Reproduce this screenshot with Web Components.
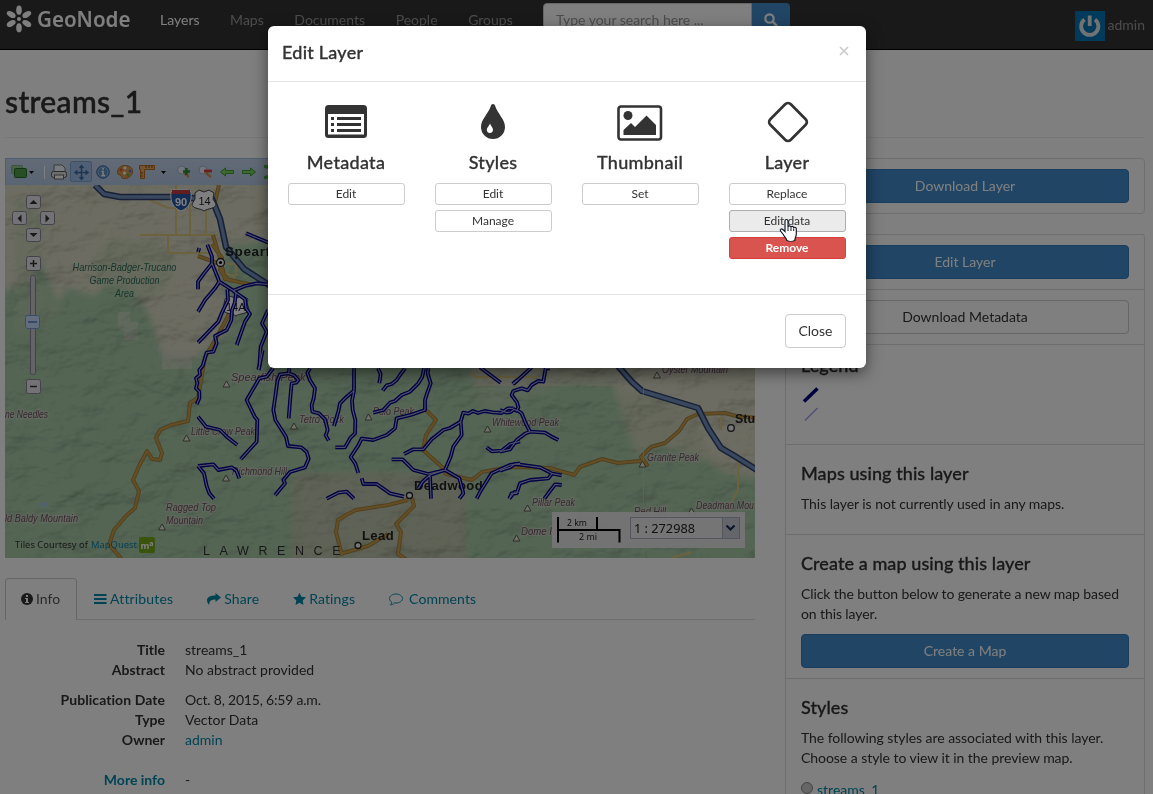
<!DOCTYPE html>
<html lang="en"><head><meta charset="utf-8"><title>streams_1 - GeoNode</title>
<style>
html,body{margin:0;height:100%;overflow:hidden;background:#fff}
body{font:14px/20px Lato,"Liberation Sans",sans-serif;color:#333;font-variant-ligatures:none}
</style></head><body>
<geo-page></geo-page>
<script>
const def=(name,html)=>{const t=document.createElement('template');t.innerHTML=html;
customElements.define(name,class extends HTMLElement{constructor(){super();this.attachShadow({mode:'open'}).append(t.content.cloneNode(true));}});};

def('geo-button',`<style>
:host{display:flex;box-sizing:border-box;height:34px;align-items:center;justify-content:center;border:1px solid #357ebd;border-radius:4px;background:#428bca;color:#fff;font-size:14px;line-height:20px}
:host([kind=plain]){background:#fff;border-color:#ccc;color:#333}
:host([kind=danger]){background:#d9534f;border-color:#d43f3a;color:#fff;font-weight:700}
:host([size=xs]){height:22px;font-size:12px;border-radius:3px;line-height:18px;padding-right:1px}
:host([hot]){background:#ebebeb;border-color:#adadad}
</style><slot></slot>`);

def('geo-header',`<style>
:host{display:flex;height:49px;box-sizing:content-box;background:#333;border-bottom:1px solid #000;color:#999}
.logo{flex:none;width:145px;height:40px}
nav{display:flex;flex:none}
nav span{padding:10px 15.300px}
nav span:first-child{padding-left:15px}
nav .on{color:#fff}
.search{display:flex;margin:3px 0 0 15px;height:34px;flex:none}
.box{box-sizing:border-box;width:208.500px;padding:6px 12px;background:#fff;border:1px solid #ccc;border-radius:4px 0 0 4px;color:#999;letter-spacing:-.02px}
.go{width:38px;background:#428bca;border-radius:0 4px 4px 0;display:flex;align-items:center;justify-content:center}
.user{display:flex;margin:11px 8px 0 auto;gap:3px;line-height:28px;height:30px}
</style>
<svg class="logo" viewBox="0 0 145 40"><g fill="#fff" transform="translate(19 19)"><circle r="2"/>
<ellipse cy="-8.800" rx="2.800" ry="4.600"/><ellipse cy="8.800" rx="2.800" ry="4.600"/>
<g transform="rotate(60)"><ellipse cy="-9" rx="2.800" ry="4.800"/><ellipse cy="9" rx="2.800" ry="4.800"/></g>
<g transform="rotate(120)"><ellipse cy="-9" rx="2.800" ry="4.800"/><ellipse cy="9" rx="2.800" ry="4.800"/></g></g>
<text x="37" y="27" textLength="93.500" lengthAdjust="spacingAndGlyphs" fill="#fff" font-family="Noto Sans,sans-serif" font-weight="600" font-size="22">GeoNode</text></svg>
<nav><span class="on">Layers</span><span>Maps</span><span>Documents</span><span>People</span><span>Groups</span></nav>
<div class="search"><div class="box">Type your search here ...</div><div class="go"><svg width="14" height="14" viewBox="0 0 14 14" fill="none" stroke="#fff"><circle cx="5.500" cy="5.500" r="4.200" stroke-width="2.200"/><path d="M8.700 8.700l3.600 3.600" stroke-width="2.600" stroke-linecap="round"/></svg></div></div>
<div class="user"><svg width="30" height="30" viewBox="0 0 30 30"><rect width="30" height="30" fill="#0077b9"/><path d="M9.500 8.500a8.600 8.600 0 1 0 10.500 0M14.700 4.500v10.500" fill="none" stroke="#e4e4e4" stroke-width="3.800"/></svg><span>admin</span></div>`);

def('map-toolbar',`<style>
:host{display:flex;height:27px;box-sizing:border-box;border:1px solid #99bbe8;border-bottom:0;background:linear-gradient(#c4d5ec,#b4c9e6)}
svg{display:block}
</style><svg width="748" height="26" viewBox="6 159 748 26">
<g stroke="#286a28" fill="#4e9d4a"><rect x="11.500" y="165.500" width="11" height="8" rx="1" fill="#93c590" stroke="#7ba97a"/><rect x="14.500" y="168.500" width="12" height="9" rx="1"/></g>
<path d="M29 171h5l-2.500 3zM161 171h5l-2.500 3z" fill="#111"/><path d="M44.500 166v13" stroke="#fff"/>
<rect x="70.500" y="161.500" width="21" height="20" rx="2" fill="#a0bfe8" stroke="#7ba3d0"/>
<g><path d="M54 165h8l3 3v6H54z" fill="#eef5ff" stroke="#777"/><rect x="51.500" y="171.500" width="15" height="6" rx="2" fill="#ddd" stroke="#555"/><rect x="54.500" y="175" width="9" height="4" fill="#fff" stroke="#666"/></g>
<path d="M81.500 166v13M75 172.500h13M79.500 168l2-2.500 2 2.500M79.500 177l2 2.500 2-2.500M77.500 170.500l-2.500 2 2.500 2M85.500 170.500l2.500 2-2.500 2" fill="none" stroke="#3a6aa0" stroke-width="1.400"/>
<circle cx="103" cy="172" r="6.200" fill="#5f92cb" stroke="#2a5c9e"/><circle cx="103" cy="172" r="5" fill="none" stroke="#b8d0ed" stroke-width=".7"/><path d="M103 168v1.700M101.500 171.500h1.500v4M101.500 175.500h3.500" fill="none" stroke="#fff" stroke-width="1.500"/>
<path d="M125 165.500c5 0 8 3 7.500 6.500s-4 7-9 6.500c-3 0-1-2-2.500-3s-3.500-.5-3.500-3c0-4 3-7 7.500-7z" fill="#d99a55" stroke="#b56c1c"/><g fill="#e64b3a"><circle cx="121" cy="170" r="1.400"/><circle cx="130" cy="171" r="1.500" fill="#4b7cd6"/><circle cx="125" cy="168" r="1.400" fill="#fff"/><circle cx="128" cy="175" r="1.500" fill="#57aa4a"/><circle cx="124.500" cy="173" r="1.500" fill="#fff"/></g>
<path d="M139.500 165.500h15v4h-10v9h-4v-9h-1z" fill="#eba864" stroke="#b46a1a"/><path d="M146 166v2M149 166v2M152 166v2M141 173h2M141 176h2" stroke="#7a4a10"/>
<g fill="#e6eefa" stroke="#a3b1c4"><circle cx="181.500" cy="170" r="4"/><circle cx="203" cy="170" r="4"/></g><path d="M184 173l5 4M206 173l5 4" stroke="#c9904a" stroke-width="2.300"/>
<path d="M186.500 168v7M183 171.500h7" stroke="#2d8f2d" stroke-width="2.500"/><path d="M204 171h8" stroke="#d93a3a" stroke-width="2.800"/>
<path d="M220.500 172l5-4v2.500h8v3h-8v2.500zM255.500 172l-5-4v2.500h-8v3h8v2.500z" fill="#7dd05c" stroke="#3f9a34"/>
<path d="M264 165h5v4l-5-1zM264 179h5v-4l-5 1z" fill="#4eae43"/></svg>`);

def('map-view',`<style>
:host{display:block;height:373px}
svg{display:block;width:750px;height:373px}
.casing{fill:none;stroke:#00008a;stroke-width:11.500;stroke-linejoin:round}
.core{fill:none;stroke:#a0a0d2;stroke-width:3.500;stroke-linejoin:round}
.pk{font:italic 11px "Liberation Sans",sans-serif;fill:#6d525b;stroke:#d8d4d0;stroke-opacity:.55;stroke-width:2.500px;paint-order:stroke}
.city{font:bold 13.500px "Liberation Sans",sans-serif;fill:#222;letter-spacing:.4px}
</style>
<svg viewBox="5 185 750 373"><defs>
<filter id="hill" x="0" y="0" width="1" height="1"><feTurbulence type="fractalNoise" baseFrequency=".022 .036" numOctaves="4" seed="8"/><feDiffuseLighting surfaceScale="8" lighting-color="#fff" diffuseConstant="1.150"><feDistantLight azimuth="225" elevation="58"/></feDiffuseLighting></filter>
<filter id="soft"><feGaussianBlur stdDeviation="3"/></filter>
<g id="s">
<g transform="translate(0 150) scale(.33333)"><path d="M598 294l-4 12M622 284l14 36v20l22 55 42 27 35-14 35-8 40 4M636 340l-24 30-18 25v23M658 395l-13 20-30 35-21 35M738 250l72 30M682 418l2 32-19 40-10 25-61 63M700 422l8 8-4 30-8 20-2 30-14 30-35 18 5 22-10 25-20 3-12 40-10 12 2 15-12 10 4 15-4 15 10 10v20l-8 18M700 422l35 26 3 27 12 17-15 23-25 70M804 480l-18 40 14 25-18 45-4 60-4 8"/></g>
<g transform="translate(0 350) scale(.33333)"><path d="M594 200l24 30 42 10 20 20 32 25M594 348l46-5 15 17 40-8 14 10 9 23M594 348l18 22 8 38 8 22 14 16"/></g>
<g transform="translate(250 350) scale(.33333)"><path d="M38 0l-6 30-6 30M70 54L50 80l-22 5-38 65 24 50 8 10-2 65-48 53M118 55l-2 15-26 3-8 20-4 32-8 55 6 30 32 50 6 28 40 4 16 14 6 20-11 26-45 14-20 24 5 10-30 36M116 70l16 6 13 14-6 8-14 2-3 30-6 75M180 55l-8 14 8 22 15 24-4 30-6 20 2 20 20 5 18 18 8 32-6 16 9 16M312 55v67l-6 30 2 28 8 30-1 40-14 14-16 28h-29M312 122l-24 20-18 18-5 25-13 43M384 55l8 18-4 27M465 55l-15 20-10 15-15 12-15 4-12 16M522 55l-5 25-12 20-25 25-25 10-20 18-15 5-20 22-30 8M535 55l-2 15 9 30-10 28-7 22v30l-40 14-45 11-5 30-20 16-5 4-40 15-35-4-10 20-23 35 14 20 9 28M335 385l5 17h40l40 28 42 10M230 446l35-18 25-3 22 21M690 52l62 46M425 328h33l14 14 18 18 45 12 50-12M462 312l28-14h30l25-30 35-28 20-6 32-19 8-27 15 3 14-8 15 6 20-6 25 4 25 2 20-14 16 0M632 215l3 40-25 35-8 30-17 40 43 25 12 45-12 16M585 360l-45 15 3 71M540 375l-22 20-13 20M710 292l15 12 30-2 25-20 30-8M680 446l10-20 35-56 55-25 30-5M788 102l14-12M778 446l16-20h12"/></g>
<g transform="translate(500 350) scale(.33333)"><path d="M150 55h-13l-7 40-15-2-20 12-12 16-18-6-25 8-5 12 16 22 4 15-5 10-8-4-10 8-12 2-20-8M95 52L40 102M50 180l15 10 12 30 13 25 45 3 20 12 20 10M90 245l-15 6-25 19-20 28-30 7M0 362l30-10 15-10 75 10 35 18 30 6M155 372l-10 13-55 5-30 10-10 30-15 0-7 16M185 405l-20-2-32 43"/></g></g>
<path id="rd" d="M219 185l-4 17M213 235l6 20 6 24 28 6M198 256l22 8M212 244l10 14-2 12 8 10M236 300l-10 20-12 22-9 15-7 41-8 5-2 18-17 4-11 5-4 8 6 15-2 7-8-1-5-8-8 15-6 14 6 11-4 17-9 8-12 14-5 15 12 13v9M426 410l10 10-10 15-3 15 10 9 10 9 3 6 26 6 10-8 28-5 40 1 24 7 6-8 22-8 16 4 22-2 7 4-6-8 10-10 14-4 14-12 8-12 11-5 27-1 11 3 34 3v36M412 498l2 8-8 8-10 10 5 8-3 22 12 8M408 500l-20 5-32 5-10 5-8 5-2 12 6 23M340 554l28-8 20-12"/>
<path id="hw" d="M95 185l9 9 16 3h50l42 2 8 20 6 28 18 22 28 18M618 366l14 16 10 9 56 17 10 20 13 20 12 7 24 15"/></defs>
<rect x="5" y="185" width="750" height="373" fill="#a9cba9"/>
<g fill="#dad9c4" filter="url(#soft)"><path d="M0 180H275v60l-50 5-5 30 10 55-38 30-30-5-12-40-18-25-22-8-16 14-26-8-10 14-18-40-10 20-30 10z"/><path d="M293 474h175v90H293z" fill="#bec5ac"/><path d="M472 360h150l50 28 60 10 30 40v40h-30l-35-22-40-12-20 10-8-20-15-45-45-4-85 26-12-30z" fill="#ccd1b8"/><path d="M618 390h30l45 20 15 45 60 25v-120H618z"/></g>
<path d="M110 240l-18 22 6 22 35 20 30-14 12-30-20-20zM15 195l30 20-10 60 30 40-50 20z" fill="#bdd0b0" opacity=".55" filter="url(#soft)"/>
<g fill="#d4d4c4"><path d="M162 350h30v19h-30zM118 312h12v10h8v18h-14v-10h-6zM168 326h14v12h-14z" opacity=".6"/></g>
<path d="M475 386h138v72H475zM678 475h57v83h-57zM468 473h90v85h-90z" fill="#a9cba9" opacity=".65"/>
<rect x="5" y="185" width="750" height="373" filter="url(#hill)" style="mix-blend-mode:multiply" opacity=".4"/>
<g fill="none" stroke="#d8c47c" stroke-width="2"><path d="M140 235h78M168 235v18h45M176 185v50M190 198v38M206 200v36M150 200l18 8h20M222 272l12 4v8M228 264h8v12M470 372l6 5h60M723 418h-2v12M738 455v35l-8 15M692 552l-20 6"/></g>
<g fill="none" stroke-linejoin="round"><use href="#rd" stroke="#9c803f" stroke-width="4"/><use href="#rd" stroke="#cc9c48" stroke-width="2.200"/><use href="#hw" stroke="#2c4270" stroke-width="6.500"/><use href="#hw" stroke="#7490bd" stroke-width="3.400"/></g>
<path d="M643.500 368v190" stroke="#ccd" opacity=".5"/><path d="M40 503l8-1-1 5h-7z" fill="#a3c3dd" opacity=".9"/>
<g font-family="Liberation Sans,sans-serif"><path d="M171 192l2-2h16l2 2c1 10-2 16-10 19-8-3-11-9-10-19z" fill="#2759a7" stroke="#fff"/><path d="M172 190h18v4h-18z" fill="#c43a43"/><text x="175" y="206" fill="#fff" font-size="11" font-weight="700">90</text>
<g fill="#fff" stroke="#444"><path d="M195 193l4-3 5 2 5-2 5 3-1 6 3 5c0 5-8 4-12 7-4-3-12-2-12-7l3-5z"/><path d="M225 299l4-3 7 2 7-2 5 3-1 4 2 6c0 5-9 4-13 7-4-3-13-2-13-7z"/></g><text x="198.500" y="205" font-size="11" fill="#222">14</text><text x="226" y="311" font-size="11" fill="#222">14A</text></g>
<text class="city" x="225" y="255.500" style="letter-spacing:.6px">Spearf</text><text class="city" x="414" y="490" textLength="69">Deadwood</text><text class="city" x="362" y="539.500" textLength="32">Lead</text><text class="city" x="735" y="422.500" style="letter-spacing:0" textLength="20">Stu</text>
<g fill="#eee" stroke="#222" stroke-width="1.300"><circle cx="220.500" cy="262.500" r="4"/><circle cx="409.500" cy="495.500" r="3"/><circle cx="358" cy="545.500" r="3"/><circle cx="731" cy="428" r="3.300"/></g><circle cx="220.500" cy="262.500" r="1.600"/>
<g class="pk"><text x="231" y="381">Spearfish Peak</text><text x="299" y="423" textLength="45">Tetro Rock</text><text x="373" y="414.500" textLength="41">Polo Peak</text><text x="492" y="425.500" textLength="67">Whitewood Peak</text><text x="191" y="435" textLength="64">Little Crow Peak</text><text x="232" y="474.500" textLength="55">Richmond Hill</text><text x="166" y="511" textLength="50">Ragged Top</text><text x="166" y="524" textLength="37">Mountain</text><text x="647" y="461" textLength="52">Granite Peak</text><text x="532" y="505.500" textLength="43">Pillar Peak</text><text x="521" y="535" textLength="31">Dome I</text><text x="634" y="515" textLength="32">Red Hill</text><text x="696" y="508.500" textLength="58">Deadman Mou</text><text x="662" y="373" textLength="66">Oyster Mountain</text><text x="5" y="417.500" textLength="43">ne Needles</text><text x="5" y="522" textLength="73">ld Baldy Mountain</text></g>
<g style="font:italic 11px 'Liberation Sans',sans-serif" fill="#2d6d5a" text-anchor="middle"><text x="124.500" y="271" textLength="104">Harrison-Badger-Trucano</text><text x="124.500" y="284" textLength="70">Game Production</text><text x="124.500" y="297" textLength="19">Area</text></g>
<path d="M223 387l3.500-6 3.500 6zM290.500 429l3.500-6 3.500 6zM365 420l3.500-6 3.500 6zM484 432l3.500-6 3.500 6zM183 441l3.500-6 3.500 6zM222.500 481l3.500-6 3.500 6zM158.500 530l3.500-6 3.500 6zM639 467l3.500-6 3.500 6zM524 511l3.500-6 3.500 6zM513 541l3.500-6 3.500 6zM653.500 378l3.500-6 3.500 6zM688 514l3.500-6 3.500 6z" fill="#dde5d5" stroke="#554f44" stroke-width=".9"/>
<g font-family="Liberation Sans,sans-serif" font-size="12.500" fill="#333"><text x="203" y="554.500" style="letter-spacing:9.600px">LAWRENCE</text></g>
<use href="#s" class="casing"/><use href="#s" class="core"/>
<g fill="#e6e6ea" stroke="#858591"><rect x="26.500" y="195.500" width="14" height="13" rx="2"/><rect x="12.500" y="211.500" width="14" height="13" rx="2"/><rect x="40.500" y="211.500" width="14" height="13" rx="2"/><rect x="26.500" y="228.500" width="14" height="13" rx="2"/><rect x="26.500" y="256.500" width="14" height="14" rx="2"/><rect x="30.500" y="275.500" width="5" height="99" rx="2" fill="#c9c9cf"/><rect x="26.500" y="379.500" width="14" height="14" rx="2"/><rect x="25.500" y="315.500" width="14" height="13" rx="2" fill="#c5dcfa" stroke="#7498cf"/></g>
<path d="M29.500 204l4-4 4 4zM21.500 214.500l-4 4 4 4zM45.500 214.500l4 4-4 4zM29.500 233l4 4 4-4z" fill="#333"/><path d="M30 263.500h7M33.500 260v7M30 386.500h7" stroke="#333" stroke-width="1.500"/><path d="M28 322h9" stroke="#4b78bd" stroke-width="1.500"/>
<g font-family="Noto Sans,sans-serif" font-size="9.500"><text x="15" y="548" fill="#333" textLength="73">Tiles Courtesy of</text><text x="91" y="548" fill="#0e7fa5" textLength="46">MapQuest</text></g>
<rect x="139" y="537" width="16" height="16" rx="2" fill="#76a818"/><text x="140.500" y="549" fill="#fff" font-family="Open Sans,sans-serif" font-weight="700" font-size="9">m<tspan dy="-3" font-size="7">a</tspan></text>
<rect x="552" y="512" width="193" height="36" fill="#e8e8e8" opacity=".93"/><path d="M557 530h62.500v12.500M558 517v25.500M597 517v13" fill="none" stroke="#000" stroke-width="2"/>
<g font-family="Noto Sans,sans-serif" fill="#222"><text x="567" y="525.500" font-size="9" textLength="20">2 km</text><text x="579" y="540" font-size="9" textLength="18">2 mi</text></g>
<rect x="630.500" y="517.500" width="109" height="21" fill="#fff" fill-opacity=".2" stroke="#aaadba"/><rect x="722.500" y="517.500" width="17" height="21" fill="#c8cdd8" stroke="#aaadba"/><path d="M726.500 525.500l4 4 4-4" fill="none" stroke="#1d2f52" stroke-width="2.200"/><text x="634" y="533" font-family="Noto Sans,sans-serif" font-size="12" fill="#222" textLength="61">1 : 272988</text>
</svg>`.replaceAll(' textLength',' lengthAdjust="spacingAndGlyphs" textLength'));

def('geo-tabs',`<style>
:host{display:flex;height:42px;box-sizing:border-box;border-bottom:1px solid #ddd;color:#0088a8}
div{display:flex;height:41px;box-sizing:border-box;padding:0 15px;align-items:center;gap:3px;border:1px solid transparent;margin-right:2px}
.on{height:42px;width:72px;border:1px solid #ccc;border-bottom:0;background:#fff;border-radius:4px 4px 0 0;color:#555;margin-right:1px;padding-bottom:1px}
svg{flex:none}
</style>
<div class="on" style="gap:3px"><svg width="12" height="14" viewBox="0 0 12 14"><circle cx="6" cy="7" r="6" fill="#333"/><path d="M5 3h2v2H5zM4 6h3v4h1v1H4v-1h1V7H4z" fill="#fff"/></svg>Info</div>
<div><svg width="13" height="14" viewBox="0 0 13 14" fill="currentColor"><path d="M0 2h12.500v2H0zM0 6h12.500v2H0zM0 10h12.500v2H0z"/></svg><span style="letter-spacing:.16px">Attributes</span></div>
<div><svg width="14" height="14" viewBox="0 0 14 14" fill="currentColor"><path d="M8.500 1L14 5.500 8.500 10V7.500C5 7.500 2.500 8 2.200 13 .3 11 0 9.500 0 8c.5-3.500 4-4.500 8.500-4.500z"/></svg><span style="letter-spacing:.1px">Share</span></div>
<div><svg width="13" height="14" viewBox="0 0 13 14" fill="currentColor"><path d="M6.500.7l2 4 4.500.6-3.300 3.100.8 4.500-4-2.100-4 2.100.8-4.500L0 5.300l4.500-.6z"/></svg><span style="letter-spacing:.12px">Ratings</span></div>
<div style="gap:6px"><svg width="14" height="14" viewBox="0 0 14 14" fill="none" stroke="currentColor"><path d="M7 2c3.500 0 6.500 2 6.500 4.500S10.500 11 7 11l-1.500-.1C4.500 12 3 12.800 1.500 12.800c.8-.8 1.100-1.600 1.200-2.600C1.300 9.300.5 8 .5 6.500.5 4 3.500 2 7 2z"/></svg><span style="letter-spacing:.08px">Comments</span></div>`);

def('geo-facts',`<style>
:host{display:grid;grid-template-columns:160px 1fr;column-gap:20px;padding-top:20px}
b{text-align:right}.gap{grid-column:1/3;height:10px}.gap.big{height:20px}.link{color:#0088a8}
</style><b>Title</b><span>streams_1</span><b>Abstract</b><span>No abstract provided</span><i class="gap"></i><b style="letter-spacing:.06px">Publication Date</b><span style="letter-spacing:-.2px">Oct. 8, 2015, 6:59 a.m.</span><b>Type</b><span>Vector Data</span><b>Owner</b><span class="link">admin</span><i class="gap big"></i><b class="link">More info</b><span>-</span>`);

def('side-panel',`<style>
:host{display:block;width:360px;box-sizing:border-box}
.card{border:1px solid #ddd;border-radius:4px;box-sizing:border-box;padding:10px 15px;height:56px;margin-bottom:20px}
.list{border:1px solid #ddd;border-top:0;border-radius:4px 4px 0 0}
section{border-top:1px solid #ddd;padding:10px 15px;box-sizing:border-box;height:55px}
h4{margin:8px 0 11px;font:500 18px/20px Lato,sans-serif;color:#333;-webkit-text-stroke:.3px #333;letter-spacing:.08px}
p{margin:0 0 10px;letter-spacing:-.05px}
.leg h4{margin:0}
.leg svg{display:block;margin-top:11px}
.opt{display:flex;gap:4px;color:#0088a8;padding-top:2px}
.opt i{width:10px;height:10px;border:1px solid #888;border-radius:50%;background:#ccc;margin-top:2px}
</style>
<div class="card"><geo-button>Download Layer</geo-button></div>
<div class="list"><section><geo-button>Edit Layer</geo-button></section>
<section><geo-button kind="plain">Download Metadata</geo-button></section>
<section class="leg" style="height:100px"><h4>Legend</h4><svg width="20" height="40" viewBox="0 0 20 40"><path d="M3 15.500L16.500 2.500" stroke="#000080" stroke-width="3.500"/><path d="M4 34.500L16.500 22" stroke="#a3a3e6" stroke-width="1.600"/></svg></section>
<section style="height:90px"><h4>Maps using this layer</h4><p>This layer is not currently used in any maps.</p></section>
<section style="height:144px"><h4>Create a map using this layer</h4><p style="letter-spacing:-.1px">Click the button below to generate a new map based on this layer.</p><geo-button>Create a Map</geo-button></section>
<section style="height:200px"><h4>Styles</h4><p>The following styles are associated with this layer. Choose a style to view it in the preview map.</p><div class="opt"><i></i>streams_1</div></section></div>`);

def('modal-tool',`<style>
:host{display:flex;flex-direction:column;width:117px;gap:5px}
.ic{height:47px;display:flex;align-items:center;justify-content:center;padding-right:2px}
h4{margin:2px 0 6px;text-align:center;font:500 18px/20px Lato,sans-serif;color:#333;-webkit-text-stroke:.3px #333;letter-spacing:.3px;padding-right:1px}
</style><div class="ic"><slot name="icon"></slot></div><h4><slot name="title"></slot></h4><slot></slot>`);

def('edit-modal',`<style>
:host{display:block;box-sizing:border-box;width:598px;height:342px;background:#fff;border-radius:6px;box-shadow:0 5px 15px rgba(0,0,0,.5)}
header{display:flex;justify-content:space-between;box-sizing:border-box;height:56px;border-bottom:1px solid #e5e5e5;padding:16px 16px 0 14px}
header b{font:500 18px/20px Lato,sans-serif;-webkit-text-stroke:.3px #333;letter-spacing:.25px}
header svg{margin-top:3px}
main{display:flex;gap:30px;padding:16px 20px 0;height:212px;box-sizing:border-box}
footer{display:flex;justify-content:flex-end;border-top:1px solid #e5e5e5;padding:19px 20px}
footer geo-button{width:61px}
svg{display:block}
</style>
<header><b>Edit Layer</b><svg width="12" height="12" viewBox="0 0 12 12"><path d="M2 2l8 8M10 2l-8 8" stroke="#ccc" stroke-width="1.700"/></svg></header>
<main>
<modal-tool><svg slot="icon" width="42" height="33" viewBox="0 0 42 33"><rect width="42" height="33" rx="3.500" fill="#333"/><path d="M3 9h36v20.500H3z" fill="#fff"/><path d="M6 12h3v3H6zM6 18h3v3H6zM6 24h3v3H6zM12 12h24v3H12zM12 18h24v3H12zM12 24h24v3H12z" fill="#333"/></svg><span slot="title">Metadata</span><geo-button kind="plain" size="xs">Edit</geo-button></modal-tool>
<modal-tool><svg slot="icon" width="24" height="35" viewBox="0 0 24 35" style="margin-top:-1px"><path d="M12 0c1.200 0 1.800.8 2.200 2C16 9 24 15 24 23a12 12 0 0 1-24 0C0 15 8 9 9.800 2 10.200.8 10.800 0 12 0z" fill="#333"/><path d="M9 19.500c.8 2.500 3 4 3 6.300a3.100 3.100 0 0 1-6.200 0c0-2.300 2.400-3.800 3.200-6.300z" fill="#fff"/></svg><span slot="title">Styles</span><geo-button kind="plain" size="xs">Edit</geo-button><geo-button kind="plain" size="xs">Manage</geo-button></modal-tool>
<modal-tool><svg slot="icon" width="46" height="36" viewBox="0 0 46 36" style="margin-top:3px"><rect x="1.500" y="1.500" width="42.500" height="33" rx="2.500" fill="none" stroke="#333" stroke-width="2.600"/><circle cx="11" cy="10.500" r="4.500" fill="#333"/><path d="M6.500 30v-5l7.500-7 4 4L29.500 10.500 39 20v10z" fill="#333"/></svg><span slot="title">Thumbnail</span><geo-button kind="plain" size="xs">Set</geo-button></modal-tool>
<modal-tool><svg slot="icon" width="42" height="42" viewBox="0 0 42 42" style="margin:0 0 0 2px"><rect x="6.500" y="6.500" width="29" height="29" rx="4" transform="rotate(45 21 21)" fill="none" stroke="#333" stroke-width="2.700"/></svg><span slot="title">Layer</span><geo-button kind="plain" size="xs">Replace</geo-button><geo-button kind="plain" size="xs" hot>Edit data</geo-button><geo-button kind="danger" size="xs">Remove</geo-button></modal-tool>
</main><footer><geo-button kind="plain">Close</geo-button></footer>`);

def('geo-page',`<style>
:host{display:block;height:794px;overflow:hidden;position:relative}
.wrap{margin:0 8px 0 5px}
h2{margin:0;height:88px;box-sizing:border-box;padding-top:34px;font:500 30px/34px Lato,sans-serif;border-bottom:1px solid #eee;-webkit-text-stroke:.5px #333;letter-spacing:.35px}
.cols{display:flex;justify-content:space-between;padding-top:20px}
.left{width:750px}
geo-tabs{margin-top:20px}
.shade{position:absolute;inset:0;background:rgba(0,0,0,.5)}
edit-modal{position:absolute;left:268px;top:26px}
.hand{position:absolute;left:779px;top:218px}
</style>
<geo-header></geo-header>
<div class="wrap"><h2>streams_1</h2><div class="cols"><div class="left"><map-toolbar></map-toolbar><map-view></map-view><geo-tabs></geo-tabs><geo-facts></geo-facts></div><side-panel></side-panel></div></div>
<div class="shade"></div><edit-modal></edit-modal>
<svg class="hand" width="19" height="25" viewBox="0 0 19 25"><path d="M6 3c0-2 3-2 3 0v6c0-1.500 3-1.500 3 .5 0-1.500 2.700-1.500 2.700.7 0-1.500 2.600-1.200 2.600.8v5c0 3-1.500 4-1.500 6.500-2 1-6 1-8 0 0-2-2.500-3.500-3.500-6L1.500 13c-.8-1.700 1-2.700 2.300-1.500L6 13.500z" fill="#fff" stroke="#111827" stroke-width="1.200"/><path d="M9 9v4M12 9.500V13M14.700 10.500V13" stroke="#111827"/></svg>`);
</script></body></html>
